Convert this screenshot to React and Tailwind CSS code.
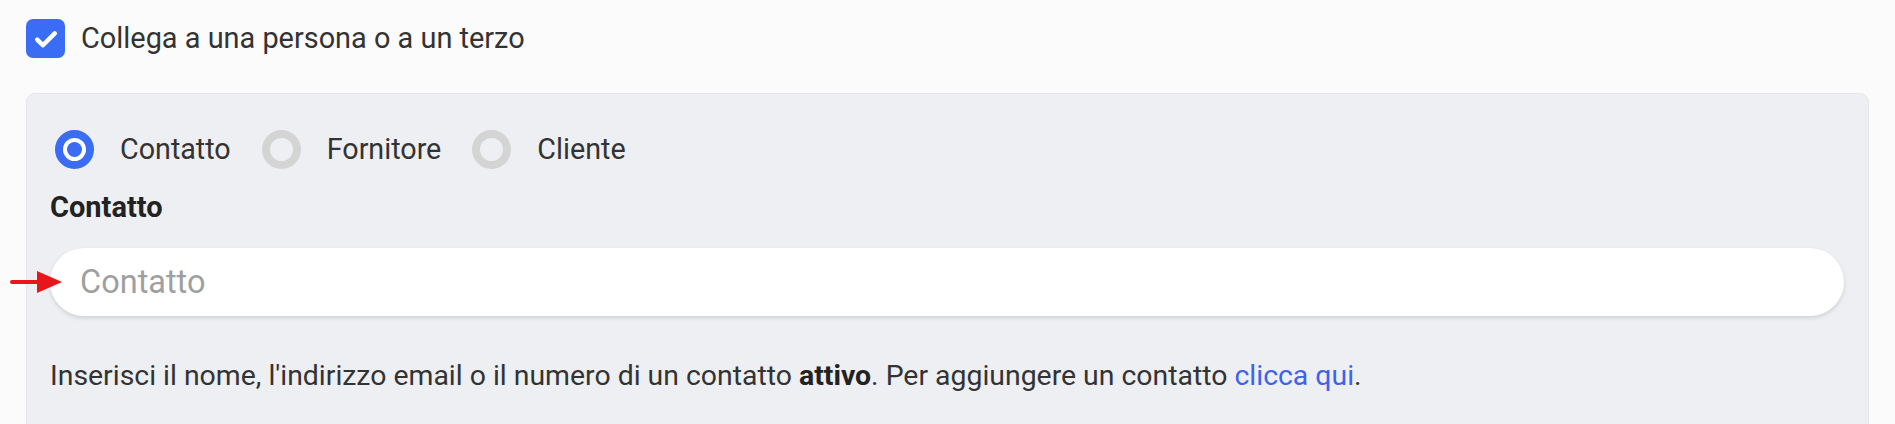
import React from "react";

function Radio({ checked, label }) {
  return (
    <div className="flex items-center gap-[26px]">
      {checked ? (
        <div className="w-[39px] h-[39px] rounded-full border-[8px] border-[#3b6cf4] bg-white flex items-center justify-center">
          <div className="w-[15px] h-[15px] rounded-full bg-[#3b6cf4]" />
        </div>
      ) : (
        <div className="w-[39px] h-[39px] rounded-full border-[8px] border-[#d4d4d4]" />
      )}
      <span className="text-[28.7px] leading-[39px] text-[#333]">{label}</span>
    </div>
  );
}

export default function App() {
  return (
    <div className="min-h-screen bg-[#fbfbfb] font-['Roboto',sans-serif] text-[#333] pt-[19px] pb-10">
      <div className="flex items-center gap-4 pl-[26px]">
        <div className="w-[39px] h-[39px] rounded-[7px] bg-[#3b6cf4] flex items-center justify-center">
          <svg width="30" height="30" viewBox="0 0 24 24" fill="none" stroke="white" strokeWidth="3.6" strokeLinecap="round" strokeLinejoin="round">
            <path d="M5 12.5l4.5 4.5L19 7.5" />
          </svg>
        </div>
        <span className="text-[28.9px] leading-[39px] text-[#333]">Collega a una persona o a un terzo</span>
      </div>

      <div className="mx-[26px] mt-[35px] rounded-[9px] bg-[#eeeff2] border border-[#e6e7ea] pl-[23px] pr-[24px] pt-[36px] pb-[40px]">
        <div className="flex items-center gap-[31px] pl-[5px]">
          <Radio checked label="Contatto" />
          <Radio label="Fornitore" />
          <Radio label="Cliente" />
        </div>
        <div className="mt-[18px] text-[29px] leading-[40px] font-bold text-[#222]">Contatto</div>
        <div className="relative mt-[21px]">
          <svg className="absolute left-[-40px] top-[23px]" width="52" height="22" viewBox="0 0 52 22">
            <rect x="0" y="9" width="30" height="4" rx="2" fill="#e8161b" />
            <polygon points="27,0 52,11 27,22" fill="#e8161b" />
          </svg>
          <div className="h-[68px] rounded-full bg-white shadow-[0_2px_4px_rgba(0,0,0,0.13)] flex items-center pl-[30px]">
            <span className="text-[32.5px] text-[#9f9f9f]">Contatto</span>
          </div>
        </div>
        <p className="mt-[40px] text-[28.4px] leading-[40px] text-[#333]">
          Inserisci il nome, l'indirizzo email o il numero di un contatto <b className="font-bold text-[#222]">attivo</b>. Per aggiungere un contatto <a className="text-[#3d63ee]">clicca qui</a>.
        </p>
      </div>
    </div>
  );
}
